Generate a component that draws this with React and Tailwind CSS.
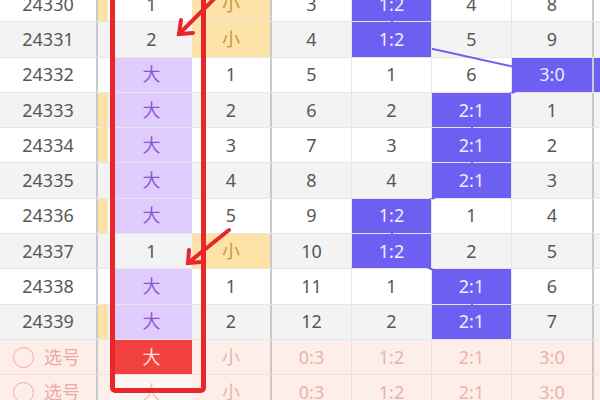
import React from "react";

const ratios = ["0:3", "1:2", "2:1", "3:0"];

const rows = [
  { no: "24330", prev: true, big: "1", small: "hit", r: [3, "hit", 4, 8] },
  { no: "24331", prev: false, big: "2", small: "hit", r: [4, "hit", 5, 9] },
  { no: "24332", prev: false, big: "hit", small: 1, r: [5, 1, 6, "hit"], next: true },
  { no: "24333", prev: true, big: "hit", small: 2, r: [6, 2, "hit", 1] },
  { no: "24334", prev: true, big: "hit", small: 3, r: [7, 3, "hit", 2] },
  { no: "24335", prev: false, big: "hit", small: 4, r: [8, 4, "hit", 3] },
  { no: "24336", prev: true, big: "hit", small: 5, r: [9, "hit", 1, 4] },
  { no: "24337", prev: false, big: "1", small: "hit", r: [10, "hit", 2, 5] },
  { no: "24338", prev: false, big: "hit", small: 1, r: [11, 1, "hit", 6] },
  { no: "24339", prev: true, big: "hit", small: 2, r: [12, 2, "hit", 7] },
];

// centres of the hit cells in the ratio group, for the trend line
const points = rows
  .map((row, i) => {
    const k = row.r.indexOf("hit");
    return `${312 + 80 * k},${35.3 * i + 17.6}`;
  })
  .join(" ");

const Row = ({ row, i }) => {
  const bg = i % 2 === 0 ? "bg-white" : "bg-[#f3f3f3]";
  return (
    <div className={`flex h-[35.3px] border-b border-[#e6e6e6] ${bg}`}>
      <div className="w-[98px] border-r-2 border-[#c9c9c9] flex items-center justify-center">
        {row.no}
      </div>
      <div className="w-[13px] pr-[3px]">
        {row.prev && <div className="h-full bg-[#fde3a7]" />}
      </div>
      {row.big === "hit" ? (
        <div className="w-[81px] flex items-center justify-center bg-[#dfcbfc] text-[#8b58d4]">
          大
        </div>
      ) : (
        <div className="w-[81px] flex items-center justify-center">{row.big}</div>
      )}
      {row.small === "hit" ? (
        <div className="w-[80px] border-r-2 border-[#c9c9c9] flex items-center justify-center bg-[#fde3a7] text-[#c8983e]">
          小
        </div>
      ) : (
        <div className="w-[80px] border-r-2 border-[#c9c9c9] flex items-center justify-center">
          {row.small}
        </div>
      )}
      {row.r.map((v, k) => {
        const edge =
          k === 3 ? "w-[82px] border-r-2 border-[#c9c9c9]" : "w-[80px] border-r border-[#e6e6e6]";
        return v === "hit" ? (
          <div
            key={k}
            className={`${edge} relative z-20 flex items-center justify-center bg-[#6c5ff2] text-[#eeedff]`}
          >
            {ratios[k]}
          </div>
        ) : (
          <div key={k} className={`${edge} flex items-center justify-center`}>
            {v}
          </div>
        );
      })}
      <div className="flex-1">{row.next && <div className="h-full bg-[#6c5ff2]" />}</div>
    </div>
  );
};

const PickRow = ({ first }) => (
  <div className="flex h-[35.3px] border-b border-[#f6dcd6] bg-[#fdeeea] text-[#e9b4ab]">
    <div className="w-[98px] border-r-2 border-[#c9c9c9] flex items-center pl-[13px] gap-[10px]">
      <span className="w-[21px] h-[21px] rounded-full border-[1.5px] border-[#f0a9a6]" />
      <span className="text-[#eea9a5]">选号</span>
    </div>
    <div className="w-[13px]" />
    {first ? (
      <div className="w-[81px] flex items-center justify-center bg-[#f2423f] text-[#ffe3e0]">大</div>
    ) : (
      <div className="w-[81px] flex items-center justify-center bg-[#fdf6f4] text-[#eec3bb]">大</div>
    )}
    <div className="w-[80px] border-r-2 border-[#c9c9c9] flex items-center justify-center">小</div>
    {ratios.map((v, k) => (
      <div
        key={v}
        className={`${
          k === 3 ? "w-[82px] border-r-2 border-[#c9c9c9]" : "w-[80px] border-r border-[#f3ddd8]"
        } flex items-center justify-center`}
      >
        {v}
      </div>
    ))}
    <div className="flex-1" />
  </div>
);

export default function App() {
  return (
    <div className="w-[600px] h-[400px] overflow-hidden bg-white font-['Noto_Sans','Noto_Sans_CJK_SC',sans-serif] text-[18px] text-[#575757]">
      <div className="relative -mt-[13px]">
        {rows.map((row, i) => (
          <Row key={row.no} row={row} i={i} />
        ))}
        <PickRow first />
        <PickRow />

        <svg className="absolute left-0 top-0 z-10 pointer-events-none" width="600" height="424">
          <polyline points={points} fill="none" stroke="#6c5ff2" strokeWidth="2" />
        </svg>

        {/* red annotation box */}
        <div className="absolute z-30 left-[110px] top-0 w-[96px] h-[406px] border-[5px] border-[#e8272c] rounded-b-[5px]" />

        {/* red arrows */}
        <svg className="absolute left-0 top-0 z-30 pointer-events-none" width="600" height="424">
          <g stroke="#e8272c" strokeWidth="4" strokeLinecap="round" fill="none">
            <line x1="220" y1="6" x2="179" y2="47" />
            <polyline points="181,33 179,47 193,46" />
            <line x1="229" y1="243" x2="188" y2="276" />
            <polyline points="189,263 188,276 201,275" />
          </g>
        </svg>
      </div>
    </div>
  );
}
